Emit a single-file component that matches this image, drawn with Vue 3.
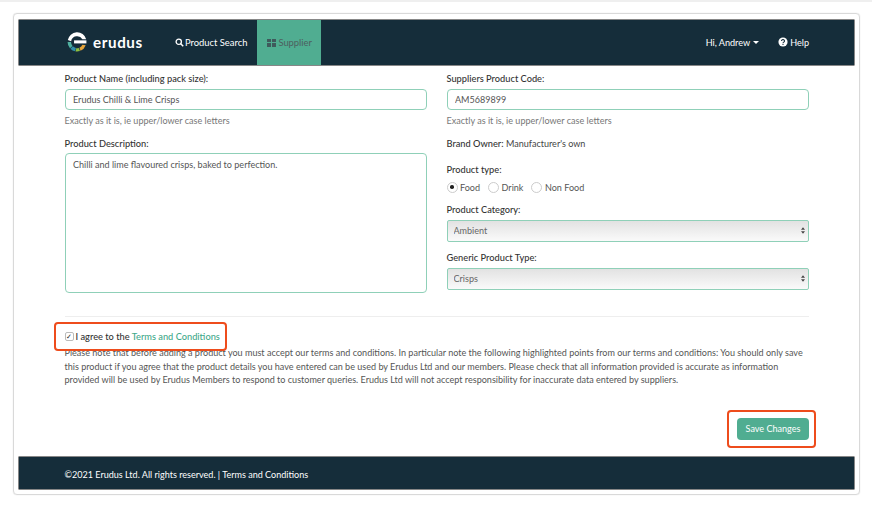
<script setup>
import { ref } from 'vue'

const productName = ref('Erudus Chilli & Lime Crisps')
const productCode = ref('AM5689899')
const description = ref('Chilli and lime flavoured crisps, baked to perfection.')
const productType = ref('Food')
const types = ['Food', 'Drink', 'Non Food']
const category = ref('Ambient')
const generic = ref('Crisps')
const agreed = ref(true)
</script>

<template>
  <div class="page">
    <div class="card">
      <header class="topbar">
        <div class="brand">
          <svg class="logo" viewBox="1.5 1.5 17 17" width="20" height="20">
            <path d="M17.8 7.6A8 8 0 0 0 2.2 8.4L5 9.4A5.2 5.2 0 0 1 14.6 7.6Z" fill="#fff" />
            <rect x="7.5" y="8.6" width="10.5" height="2.6" fill="#fff" />
            <path d="M2 10a8 8 0 0 0 2 5.3l2.2-2A5 5 0 0 1 4.9 10Z" fill="#4fb0a0" />
            <path d="M4.4 15.7a8 8 0 0 0 4 2.2l.7-2.8a5 5 0 0 1-2.6-1.4Z" fill="#2f8fa8" />
            <path d="M8.8 18a8 8 0 0 0 3.7-.3l-.9-2.7a5 5 0 0 1-2.1.2Z" fill="#8fbf3f" />
            <path d="M13 17.5a8 8 0 0 0 4.4-4.7l-2.8-.5a5 5 0 0 1-2.5 2.6Z" fill="#e8a53a" />
          </svg>
          <span class="brand-name">erudus</span>
        </div>
        <a class="nav-item search">
          <svg viewBox="0 0 12 12" width="9" height="9"><circle cx="5" cy="5" r="3.5" fill="none" stroke="#fff" stroke-width="1.8" /><path d="M7.6 7.6 11 11" stroke="#fff" stroke-width="2" /></svg>
          Product Search
        </a>
        <a class="nav-item active">
          <span class="grid-icon"><i></i><i></i><i></i><i></i></span>
          Supplier
        </a>
        <div class="spacer"></div>
        <a class="nav-item user">Hi, Andrew <span class="caret"></span></a>
        <a class="nav-item help">
          <svg viewBox="0 0 12 12" width="10" height="10"><circle cx="6" cy="6" r="5.5" fill="#fff" /><path d="M4.2 4.7a1.8 1.6 0 1 1 2.7 1.4c-.6.4-.9.6-.9 1.2" fill="none" stroke="#152d3a" stroke-width="1.3" /><rect x="5.3" y="8.1" width="1.4" height="1.4" fill="#152d3a" /></svg>
          Help
        </a>
      </header>

      <main class="content">
        <div class="columns">
          <div class="col">
            <label class="label">Product Name (including pack size):</label>
            <input v-model="productName" class="field" type="text" />
            <p class="hint">Exactly as it is, ie upper/lower case letters</p>
            <label class="label desc-label">Product Description:</label>
            <textarea v-model="description" class="field area"></textarea>
          </div>
          <div class="col">
            <label class="label">Suppliers Product Code:</label>
            <input v-model="productCode" class="field" type="text" />
            <p class="hint">Exactly as it is, ie upper/lower case letters</p>
            <p class="owner"><b>Brand Owner:</b> Manufacturer's own</p>
            <label class="label type-label">Product type:</label>
            <div class="radios">
              <label v-for="t in types" :key="t" class="radio" @click="productType = t">
                <span class="dot" :class="{ on: productType === t }"></span>{{ t }}
              </label>
            </div>
            <label class="label cat-label">Product Category:</label>
            <div class="select-wrap">
              <select v-model="category" class="select"><option>Ambient</option><option>Chilled</option></select>
              <svg class="arrows" viewBox="0 0 6 10" width="4" height="7"><path d="M3 0 6 4H0ZM3 10 0 6h6Z" fill="#444" /></svg>
            </div>
            <label class="label gen-label">Generic Product Type:</label>
            <div class="select-wrap">
              <select v-model="generic" class="select"><option>Crisps</option><option>Nuts</option></select>
              <svg class="arrows" viewBox="0 0 6 10" width="4" height="7"><path d="M3 0 6 4H0ZM3 10 0 6h6Z" fill="#444" /></svg>
            </div>
          </div>
        </div>

        <hr class="rule" />

        <div class="agree">
          <label class="agree-label" @click="agreed = !agreed">
            <span class="check"><template v-if="agreed">✓</template></span>
            <span>I agree to the <a class="link">Terms and Conditions</a></span>
          </label>
          <span class="highlight agree-box"></span>
        </div>
        <p class="terms">Please note that before adding a product you must accept our terms and conditions. In particular note the following highlighted points from our terms and conditions: You should only save this product if you agree that the product details you have entered can be used by Erudus Ltd and our members. Please check that all information provided is accurate as information provided will be used by Erudus Members to respond to customer queries. Erudus Ltd will not accept responsibility for inaccurate data entered by suppliers.</p>

        <div class="actions">
          <button class="save" type="button">
            Save Changes
            <span class="highlight save-box"></span>
          </button>
        </div>
      </main>

      <footer class="footer">©2021 Erudus Ltd. All rights reserved. | Terms and Conditions</footer>
    </div>
  </div>
</template>

<style>
html, body { margin: 0; background: #fff; }
</style>

<style scoped>
.page { box-sizing: border-box; width: 872px; height: 505px; padding: 11px 12px 9px 13px; border-top: 2px solid #efefef; font-family: Lato, "Open Sans", sans-serif; font-size: 9.05px; color: #555; background: #fff; }
.card { box-sizing: border-box; height: 482px; width: 847px; border: 1px solid #d9d9d9; border-radius: 4px; box-shadow: 0 0 1px #ccc; padding: 6px 5px 5px; display: flex; flex-direction: column; }
.topbar { height: 45px; flex: none; background: #152d3a; display: flex; align-items: stretch; padding-left: 48px; padding-right: 45px; color: #fff; box-shadow: 0 0 0 .5px #111; }
.brand { display: flex; align-items: center; gap: 6px; width: 106px; }
.logo { margin-top: -1px; }
.brand-name { font-size: 15.2px; font-weight: 700; letter-spacing: .6px; margin-top: -1px; }
.nav-item { display: flex; align-items: center; gap: 2px; padding: 0 10px 0 0; color: #fff; font-size: 9.4px; margin-top: -1px; }
.search { margin-left: 1.5px; gap: 1.5px; padding-right: 10px; }
.nav-item.active { background: #50ad91; color: #4d5f5f; width: 64px; box-sizing: border-box; padding-left: 10px; gap: 2px; margin-top: 0; }
.grid-icon { display: grid; grid-template-columns: 4px 4px; gap: 1px; }
.grid-icon i { width: 4px; height: 3.5px; background: #3f5a5c; }
.spacer { flex: 1; }
.user { gap: 3px; padding-right: 19px; font-size: 9.1px; }
.caret { border-top: 3px solid #fff; border-left: 3px solid transparent; border-right: 3px solid transparent; margin-top: 1px; }
.help { padding: 0; font-size: 9.1px; }
.content { flex: 1; padding: 0 45px 0 45.5px; position: relative; }
.columns { display: grid; grid-template-columns: 362px 362px; column-gap: 20px; padding-top: 8px; }
.col { display: flex; flex-direction: column; align-items: stretch; }
.label { display: block; color: #333; font-weight: 500; line-height: 11px; font-size: 9.25px; }
.field { box-sizing: border-box; height: 21px; margin-top: 5px; padding: 0 7.5px; border: 1px solid #8fd0b8; border-radius: 4px; font: inherit; color: #555; background: #fff; outline: none; width: 100%; }
.hint { margin: 5px 0 0; line-height: 11px; color: #777; }
.desc-label { margin-top: 12px; }
.area { height: 140px; margin-top: 4px; padding: 5px 7.5px; resize: none; display: block; }
.owner { margin: 12px 0 0; line-height: 11px; color: #444; }
.owner b { font-weight: 500; color: #333; font-size: 9.25px; }
.type-label { margin-top: 15px; }
.radios { display: flex; gap: 8px; margin-top: 6px; height: 12px; align-items: center; }
.radio { display: flex; align-items: center; gap: 2.5px; color: #555; }
.dot { box-sizing: border-box; width: 11px; height: 11px; border: 1px solid #ccc; border-radius: 50%; background: #fff; display: flex; align-items: center; justify-content: center; }
.dot.on::after { content: ""; width: 3.5px; height: 3.5px; border-radius: 50%; background: #222; }
.cat-label { margin-top: 11px; }
.gen-label { margin-top: 10px; }
.select-wrap { position: relative; height: 22px; margin-top: 5px; }
.select { box-sizing: border-box; appearance: none; width: 100%; height: 22px; padding: 0 6px; border: 1px solid #8fd0b8; border-radius: 2px; font: inherit; color: #666; background: linear-gradient(#e2e2e2, #fafafa); outline: none; display: block; padding-bottom: 1px; }
.arrows { position: absolute; right: 4px; top: 7px; }
.rule { border: 0; border-top: 1px solid #eee; margin: 23px 0 0; }
.agree { position: relative; margin-top: 13px; height: 12px; display: flex; align-items: center; }
.agree-label { display: flex; align-items: center; gap: 2px; color: #333; font-weight: 500; font-size: 9.25px; }
.check { box-sizing: border-box; width: 9px; height: 9px; border: 1px solid #bbb; border-radius: 2px; font-size: 7px; line-height: 7px; text-align: center; color: #222; }
.link { color: #3fa98a; }
.highlight { position: absolute; box-sizing: border-box; border: 2.5px solid #ee4c1c; border-radius: 4px; pointer-events: none; }
.agree-box { left: -11px; top: -8px; width: 173px; height: 29px; }
.terms { margin: 4px 0 0; line-height: 13.5px; color: #555; font-size: 9.05px; width: 742px; }
.actions { display: flex; justify-content: flex-end; margin-top: 31px; }
.save { position: relative; box-sizing: border-box; width: 72px; height: 22px; border: 0; border-radius: 4px; background: #50ad91; color: #fff; font: inherit; padding: 0; }
.save-box { left: -10px; top: -8px; width: 89px; height: 38px; }
.footer { height: 32px; flex: none; box-sizing: border-box; background: #152d3a; color: #fff; font-size: 9.05px; line-height: 36px; padding-left: 45.5px; box-shadow: 0 0 0 .5px #111; }
</style>
